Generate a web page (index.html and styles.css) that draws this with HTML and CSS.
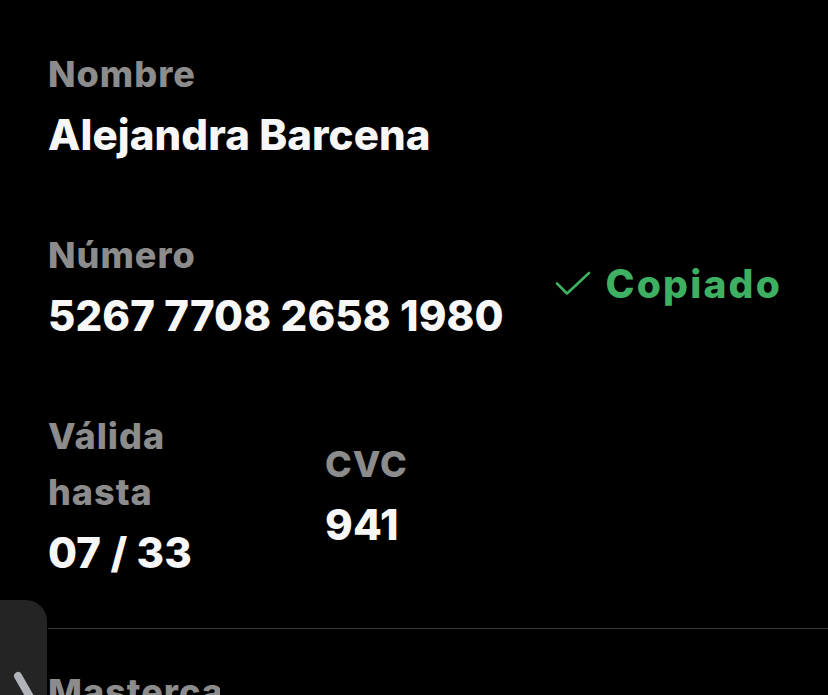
FILE: index.html
```html
<!DOCTYPE html>
<html lang="es">
<head>
<meta charset="utf-8">
<title>Detalles de la tarjeta</title>
<link rel="stylesheet" href="styles.css">
</head>
<body>
<main class="details">
  <section class="field">
    <div class="label">Nombre</div>
    <div class="value">Alejandra Barcena</div>
  </section>

  <section class="field row">
    <div class="block">
      <div class="label">Número</div>
      <div class="value">5267 7708 2658 1980</div>
    </div>
    <div class="copied">
      <svg class="check" width="36" height="26" viewBox="0 0 36 26" aria-hidden="true">
        <path d="M2 12.5 L12 22.5 L34 2" fill="none" stroke="#3eb062" stroke-width="2.6" stroke-linecap="round" stroke-linejoin="round"/>
      </svg>
      <span>Copiado</span>
    </div>
  </section>

  <section class="field pair">
    <div class="block expiry">
      <div class="label">Válida hasta</div>
      <div class="value">07 / 33</div>
    </div>
    <div class="block">
      <div class="label">CVC</div>
      <div class="value">941</div>
    </div>
  </section>

  <hr class="divider">

  <section class="field">
    <div class="label brand">Mastercard</div>
  </section>
</main>

<div class="side-tab" aria-hidden="true">
  <svg width="47" height="95" viewBox="0 0 47 95">
    <path d="M18 76 L34 104" fill="none" stroke="#b2b2ba" stroke-width="8" stroke-linecap="round"/>
  </svg>
</div>
</body>
</html>
```

FILE: styles.css
```css
* { box-sizing: border-box; }

html, body {
  margin: 0;
  padding: 0;
  background: #000;
  height: 100%;
  overflow: hidden;
}

body {
  font-family: Inter, "Liberation Sans", sans-serif;
  font-weight: 800;
  color: #f5f5f5;
}

.details {
  padding: 46px 48px 0 48px;
  display: flex;
  flex-direction: column;
}

.field + .field {
  margin-top: 60px;
}

.label {
  font-size: 36px;
  line-height: 56px;
  color: #8c8c8c;
  letter-spacing: 1px;
}

.value {
  font-size: 42px;
  line-height: 65px;
  color: #f7f7f7;
  letter-spacing: 0.1px;
}

.row {
  display: flex;
  align-items: center;
  justify-content: space-between;
}

.copied {
  display: flex;
  align-items: center;
  gap: 15px;
  color: #3eb062;
  font-size: 39px;
  line-height: 56px;
  letter-spacing: 2.2px;
  margin-bottom: 8px;
  margin-right: -2px;
}

.check {
  display: block;
}

.pair {
  display: flex;
  align-items: center;
  gap: 77px;
}

.expiry {
  width: 200px;
}

.divider {
  border: 0;
  height: 1px;
  background: #363636;
  margin: 43px -48px 35px 0;
}

.divider + .field {
  margin-top: 0;
}

.brand {
  width: 172px;
  white-space: nowrap;
  overflow: hidden;
}

.side-tab {
  position: fixed;
  left: 0;
  top: 600px;
  width: 47px;
  height: 120px;
  background: #242424;
  border-radius: 0 21px 0 0;
  overflow: hidden;
}

.side-tab svg {
  display: block;
}
```
